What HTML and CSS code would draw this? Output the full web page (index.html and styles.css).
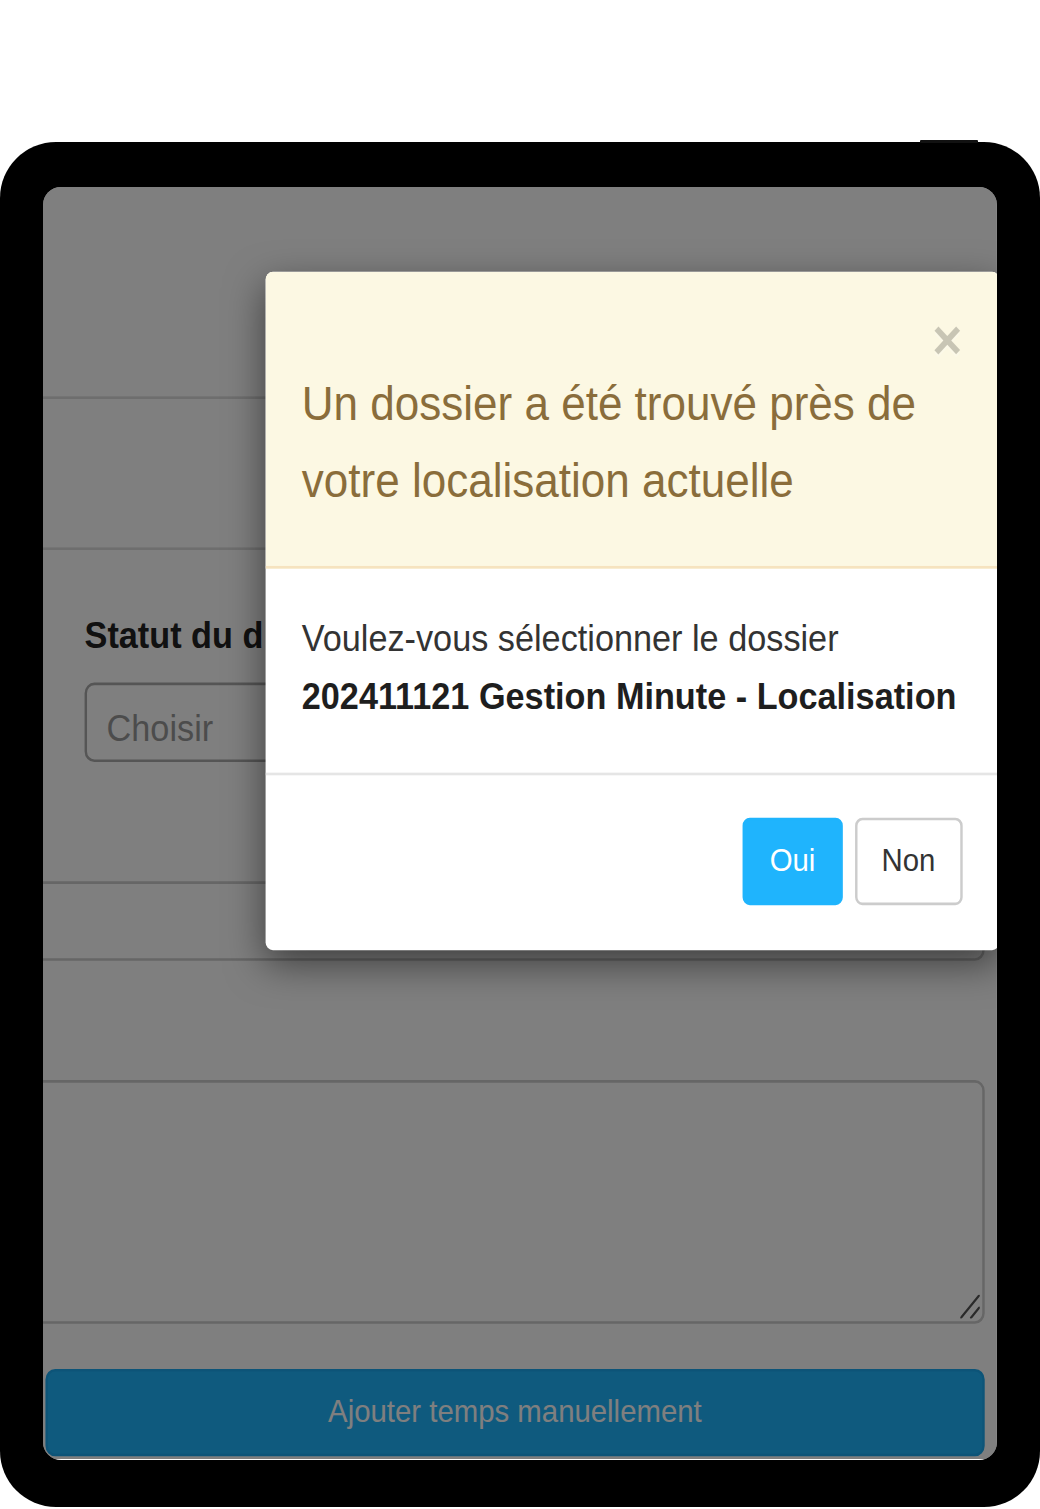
FILE: index.html
```html
<!DOCTYPE html>
<html lang="fr">
<head>
<meta charset="utf-8">
<title>Dossier trouvé</title>
<link rel="stylesheet" href="styles.css">
</head>
<body>
<div class="device">
  <div class="screen">
    <div class="viewport">
      <div class="page">
        <div class="band band-top"></div>
        <div class="band band-mid"></div>
        <div class="field">
          <label class="field-label">Statut du d</label>
          <div class="select">Choisir</div>
        </div>
        <div class="input-wide"></div>
        <div class="notes-wrap">
          <textarea class="notes" aria-label="Notes"></textarea>
          <svg class="grip" viewBox="0 0 8 9" aria-hidden="true">
            <line x1="0.3" y1="8.7" x2="7.7" y2="0.3"/>
            <line x1="4.4" y1="8.7" x2="7.7" y2="4.9"/>
          </svg>
        </div>
        <button class="btn-add" type="button">Ajouter temps manuellement</button>
      </div>
      <div class="backdrop"></div>
      <div class="modal-layer">
        <div class="modal">
          <div class="modal-header">
            <div class="close-row"><span class="close">×</span></div>
            <h4 class="modal-title">Un dossier a été trouvé près de votre localisation actuelle</h4>
          </div>
          <div class="modal-body">Voulez-vous sélectionner le dossier<br><strong>202411121 Gestion Minute - Localisation</strong></div>
          <div class="modal-footer">
            <button class="btn btn-oui" type="button">Oui</button>
            <button class="btn btn-non" type="button">Non</button>
          </div>
        </div>
      </div>
    </div>
  </div>
</div>
</body>
</html>
```
FILE: styles.css
```css
html, body {
  margin: 0;
  background: #fff;
}
body {
  height: 1509px;
  overflow: hidden;
}
.device {
  margin-top: 142px;
  width: 1040px;
  height: 1365px;
  box-sizing: border-box;
  padding: 45px 43px 47px;
  background: #000;
  border-radius: 56px;
  position: relative;
}
.device::before {
  content: "";
  position: absolute;
  top: -2px;
  left: 920px;
  width: 58px;
  height: 3px;
  background: #111;
  border-radius: 1px;
}
.screen {
  width: 954px;
  height: 1273px;
  border-radius: 18px;
  overflow: hidden;
  background: #fff;
  position: relative;
}
.viewport {
  width: 390px;
  height: 480.4px;
  transform: scale(2.446, 2.65);
  transform-origin: 0 0;
  position: relative;
  font-family: "Liberation Sans", Arial, sans-serif;
  color: #333;
}
.page {
  display: flex;
  flex-direction: column;
  height: 100%;
}
.band { flex: none; }
.band-top {
  height: 79px;
  border-bottom: 1px solid #ddd;
}
.band-mid {
  height: 55.6px;
  border-bottom: 1px solid #ddd;
}
.field {
  padding-left: 17px;
  margin-top: 22.4px;
  display: flex;
  flex-direction: column;
  align-items: flex-start;
  gap: 8.2px;
}
.field-label {
  font-weight: bold;
  font-size: 14px;
  line-height: 20px;
  color: #222;
  white-space: nowrap;
}
.select {
  height: 30px;
  box-sizing: border-box;
  width: 360px;
  border: 1px solid #aaa;
  border-radius: 4px;
  padding: 3px 8px 0;
  line-height: 26px;
  font-size: 14px;
  color: #999;
}
.input-wide {
  flex: none;
  margin-top: 45.1px;
  margin-left: -6px;
  width: 391.1px;
  height: 30px;
  border: 1px solid #ccc;
  border-radius: 4px;
  box-sizing: border-box;
}
.notes-wrap {
  flex: none;
  position: relative;
  margin: 44.7px 0 0 -6px;
  width: 391.1px;
  height: 91.7px;
}
.notes {
  display: block;
  margin: 0;
  width: 100%;
  height: 100%;
  box-sizing: border-box;
  border: 1px solid #ccc;
  border-radius: 4px;
  resize: none;
  font: inherit;
  background: #fff;
}
.grip {
  position: absolute;
  right: 2px;
  bottom: 1.8px;
  width: 8px;
  height: 9px;
  stroke: #555;
  stroke-width: 0.9;
  stroke-linecap: round;
}
.btn-add {
  flex: none;
  margin: 17px 0 0 0.8px;
  width: 384.3px;
  height: 33.2px;
  background: #1fb4fd;
  border: 1px solid #1aa9f0;
  border-radius: 4px;
  color: #fff;
  font-family: inherit;
  font-size: 12px;
  line-height: 31px;
  padding: 0;
}
.backdrop {
  position: absolute;
  inset: 0;
  background: rgba(0, 0, 0, 0.5);
}
.modal-layer {
  position: absolute;
  inset: 0;
  padding: 31.7px 0 0 90.8px;
}
.modal {
  width: 300px;
  background: #fff;
  border-radius: 3px;
  box-shadow: 0 5px 15px rgba(0, 0, 0, 0.5);
  overflow: hidden;
}
.modal-header {
  background: #fcf8e3;
  padding: 15px 15px 17.2px;
  border-bottom: 1px solid #f6e3bf;
}
.close-row {
  height: 20.4px;
  display: flex;
  justify-content: flex-end;
}
.close {
  font-size: 21px;
  font-weight: bold;
  line-height: 1;
  color: #000;
  opacity: 0.2;
  text-shadow: 0 1px 0 #fff;
}
.modal-title {
  margin: 1px 0 0;
  font-size: 18px;
  line-height: 28.7px;
  font-weight: normal;
  color: #8a6d3b;
}
.modal-body {
  padding: 16.4px 15px 17.6px;
  font-size: 14px;
  line-height: 21.5px;
  color: #333;
}
.modal-body strong {
  white-space: nowrap;
  color: #1e1e1e;
}
.modal-footer {
  border-top: 1px solid #e5e5e5;
  padding: 16.8px 15px 16.6px;
  display: flex;
  justify-content: flex-end;
  gap: 5px;
}
.btn {
  height: 32.8px;
  padding: 0 10px;
  font-family: inherit;
  font-size: 12px;
  line-height: 30.8px;
  border-radius: 3px;
  border: 1px solid;
}
.btn-oui {
  background: #1fb4fd;
  border-color: #1fb4fd;
  color: #fff;
}
.btn-non {
  background: #fff;
  border-color: #ccc;
  color: #333;
}
```
